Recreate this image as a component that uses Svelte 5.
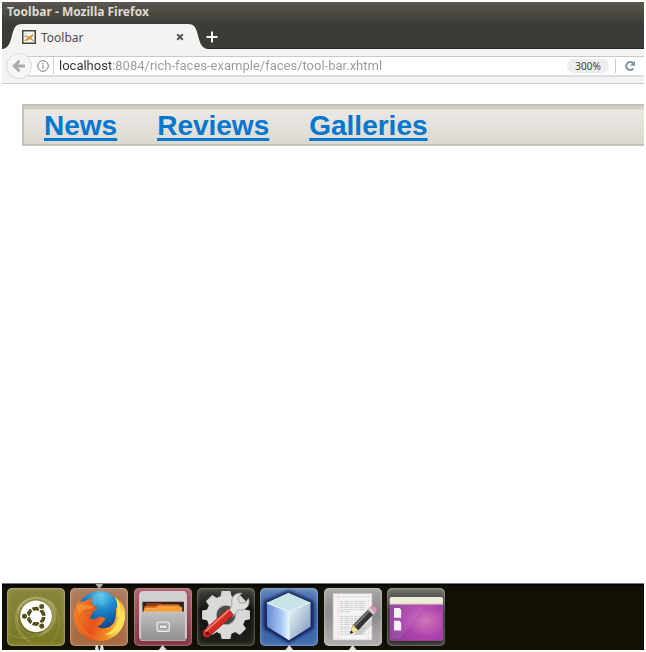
<script>
  let address = $state('localhost:8084/rich-faces-example/faces/tool-bar.xhtml');
  const links = ['News', 'Reviews', 'Galleries'];
  const teeth = [0, 45, 90, 135, 180, 225, 270, 315];
  const apps = [
    { id: 'ubuntu', name: 'Search your computer', box: '21 38 172 172', tone: 'olive', marks: 0 },
    { id: 'firefox', name: 'Firefox', box: '211 38 172 172', tone: 'copper', marks: 2, active: true },
    { id: 'files', name: 'Files', box: '11 38 172 172', tone: 'wine', marks: 1 },
    { id: 'settings', name: 'System Settings', box: '202 38 172 172', tone: 'black', marks: 0 },
    { id: 'netbeans', name: 'NetBeans', box: '13 38 172 172', tone: 'blue', marks: 1 },
    { id: 'editor', name: 'Text Editor', box: '204 38 172 172', tone: 'silver', marks: 1 },
    { id: 'desktop', name: 'Show Desktop', box: '21 38 172 172', tone: 'slate', marks: 0 }
  ];
  const lines = [78, 84, 90, 96, 102, 108, 122, 128, 134, 140, 146, 154, 160, 168, 175];
</script>

<div class="screen">
  <header class="chrome">
    <div class="title">Toolbar - Mozilla Firefox</div>
    <div class="tabs">
      <div class="tab">
        <svg class="edge" viewBox="0 0 20 24" preserveAspectRatio="none" aria-hidden="true"><path d="M0 24C7 23 8 18 10 11C12 4 13 0 20 0V24Z" /></svg>
        <div class="tab-body">
          <svg class="favicon" viewBox="0 0 14 14" aria-hidden="true">
            <rect x=".75" y=".75" width="12.5" height="12.5" fill="#faf8f2" stroke="#45443f" stroke-width="1.5" />
            <path d="M2.5 10.5l3-3-2-2 3.5 1.2 4-2.7-.5 2.6-1.5 1.4 2.5 2.5-3.6-1.5-2.4 1.5Z" fill="#d9a33e" stroke="#a58040" stroke-width=".4" />
            <path d="M2 7l2-1M10 10l2 1M3 3l1 1" stroke="#66707c" stroke-width=".7" />
          </svg>
          <span>Toolbar</span>
          <button class="close" aria-label="Close tab"><svg viewBox="0 0 8 8"><path d="M1.2 1.2l5.6 5.6M6.8 1.2L1.2 6.8" /></svg></button>
        </div>
        <svg class="edge" viewBox="0 0 20 24" preserveAspectRatio="none" aria-hidden="true"><path d="M20 24C13 23 12 18 10 11C8 4 7 0 0 0V24Z" /></svg>
      </div>
      <button class="add" aria-label="New tab"><svg viewBox="0 0 12 12"><path d="M6 .5v11M.5 6h11" /></svg></button>
    </div>
    <div class="nav">
      <button class="back" aria-label="Back"><svg viewBox="0 0 14 14"><path d="M13 7H3M7.5 1.8L2.3 7l5.2 5.2" /></svg></button>
      <div class="field">
        <svg class="info" viewBox="0 0 12 12" aria-hidden="true"><circle cx="6" cy="6" r="5.3" /><path d="M6 5v4M6 2.8v1.4" /></svg>
        <input class="address" aria-label="Address" bind:value={address} spellcheck="false" />
        <button class="zoom">300%</button>
        <button class="reload" aria-label="Reload"><svg viewBox="0 0 12 12"><path d="M9.3 8.6A4 4 0 1 1 9 3.2" /><path class="tip" d="M11 .8v5H6Z" /></svg></button>
      </div>
    </div>
  </header>

  <main>
    <nav class="toolbar">
      {#each links as link}<a href="#{link.toLowerCase()}">{link}</a>{/each}
    </nav>
  </main>

  <footer class="dock">
    <div class="launchers">
      {#each apps as app}
        <button class="tile {app.tone}" aria-label={app.name}>
          {#if app.active}<i class="mark top"></i>{/if}
          <svg viewBox={app.box}>
            {#if app.id === 'ubuntu'}
              <g fill="none" stroke="#e0dfaa" stroke-opacity=".3" stroke-width="2">
                <path d="M55 105C62 65 135 50 170 105M55 115C55 72 110 48 161 85M142 78C185 103 188 160 150 206M157 125C150 180 75 201 25 174M50 121C55 177 105 188 147 160" />
              </g>
              <path d="M50 115C55 60 130 45 160 88C180 125 160 174 110 184C148 162 165 102 133 79C105 60 75 72 50 115Z" fill="#e5e3b0" opacity=".25" />
              <path d="M55 130C50 165 80 190 100 200C65 200 38 160 45 115C50 85 70 72 85 70C65 85 55 105 55 130Z" fill="#e5e3b0" opacity=".18" />
              <circle cx="107" cy="124" r="49" fill="#4b4811" opacity=".35" />
              <circle cx="107" cy="122" r="47" fill="#fff" />
              <circle cx="107" cy="122" r="23" fill="none" stroke="#555018" stroke-width="11" />
              <path d="M107 122H66M107 122L128 158M107 122L128 86M107 122H140M107 122L90 93M107 122L90 151" stroke="#fff" stroke-width="4" />
              <circle cx="107" cy="122" r="17" fill="#fff" />
              <g fill="#555018" stroke="#fff" stroke-width="3"><circle cx="73" cy="122" r="9" /><circle cx="124" cy="93" r="9" /><circle cx="124" cy="151" r="9" /></g>
            {:else if app.id === 'firefox'}
              <defs>
                <radialGradient id="globe" cx=".55" cy=".1" r=".8"><stop stop-color="#62c8ee" /><stop offset=".45" stop-color="#1985c8" /><stop offset="1" stop-color="#123d83" /></radialGradient>
                <linearGradient id="fox" x1="0" y1="0" x2="1" y2=".25"><stop stop-color="#f28a24" /><stop offset=".5" stop-color="#e6511f" /><stop offset=".82" stop-color="#f28c22" /><stop offset="1" stop-color="#ffdf54" /></linearGradient>
              </defs>
              <circle cx="298" cy="111" r="64" fill="url(#globe)" />
              <path d="M275 62l21-11 17 5-9 10 15 9-10 15-17-7-12 9Z" fill="#78d8ee" opacity=".25" />
              <path d="M236 72C237 78 242 80 248 79C260 77 268 71 280 65C276 73 274 79 276 86C281 91 288 92 292 96C292 103 279 108 276 113C274 118 275 123 269 126C278 134 286 131 292 127C301 121 312 123 316 131C309 136 305 149 292 153C310 162 332 157 342 139C349 124 350 107 346 94L353 101C358 88 351 75 344 65C369 79 376 102 374 120C377 156 343 195 298 195C252 195 221 159 222 116C223 104 227 94 232 86Z" fill="url(#fox)" />
              <path d="M344 65C360 78 365 98 361 117L368 105C371 142 352 174 318 182L334 174C326 177 319 177 313 175C338 169 355 148 355 116L347 126C352 99 354 85 344 65Z" fill="#ffe35b" />
              <path d="M231 91C243 84 262 88 281 93L270 101C260 97 248 103 237 116C234 107 230 102 231 91Z" fill="#f49d35" opacity=".65" />
              <path d="M239 145C251 178 281 188 312 185" fill="none" stroke="#f38526" stroke-width="5" opacity=".5" />
            {:else if app.id === 'files'}
              <defs><linearGradient id="cabinet" x2="0" y2="1"><stop stop-color="#c1c0c0" /><stop offset="1" stop-color="#908e8e" /></linearGradient></defs>
              <path d="M26 188V61Q26 47 39 47H156Q168 47 168 61V188Z" fill="#d2d0cf" />
              <path d="M36 79H159V119H36Z" fill="#30211e" />
              <path d="M48 83H90L97 87H147V109H43Z" fill="#963c14" />
              <path d="M42 92H78L84 87H144V116H42Z" fill="#e4711b" />
              <path d="M40 100H75L80 95H154V119H40Z" fill="#f79c37" />
              <path d="M42 99H76L81 94H153" fill="none" stroke="#ffd078" stroke-width="2" />
              <path d="M31 109H163V194H31Z" fill="url(#cabinet)" stroke="#d0cece" stroke-width="2" />
              <rect x="79" y="139" width="37" height="28" rx="7" fill="#b9b7b7" stroke="#f0f0f0" stroke-width="3" />
              <rect x="86" y="148" width="23" height="10" rx="2" fill="#eee" stroke="#777" stroke-width="2" />
            {:else if app.id === 'settings'}
              <g fill="#d7d7d7">
                {#each teeth as angle}<path d="M270 70L275 47H301L306 70Z" transform="rotate({angle} 288 118)" />{/each}
              </g>
              <circle cx="288" cy="118" r="43" fill="none" stroke="#dadada" stroke-width="30" />
              <circle cx="288" cy="118" r="29" fill="#4a4a45" stroke="#b4b4b4" stroke-width="3" />
              <path d="M294 112L306 87C300 64 317 50 335 53L323 68L329 83L345 82L355 68C362 92 345 107 324 103L309 123Z" fill="#dededc" stroke="#8b8b88" stroke-width="2" />
              <path d="M295 99L220 166C217 177 225 188 236 183L310 118Z" fill="#d32b25" stroke="#8d1616" stroke-width="2" />
              <path d="M296 104L229 165" stroke="#ff7866" stroke-width="6" stroke-linecap="round" />
              <circle cx="233" cy="173" r="5" fill="#4c1411" />
            {:else if app.id === 'netbeans'}
              <defs>
                <linearGradient id="cube-left"><stop stop-color="#668bd2" /><stop offset=".65" stop-color="#a6c7f3" /><stop offset="1" stop-color="#e6f6ff" /></linearGradient>
                <linearGradient id="cube-right" x2="1" y2="1"><stop stop-color="#f5fcff" /><stop offset="1" stop-color="#7593b5" /></linearGradient>
                <filter id="glow"><feGaussianBlur stdDeviation="4" /></filter>
              </defs>
              <path d="M98 45L172 77V158L98 202L24 158V77Z" fill="#17235f" filter="url(#glow)" />
              <path d="M97 52L163 81L99 108L33 82Z" fill="#c9e4e6" />
              <path d="M33 82L99 108V193L34 153Z" fill="url(#cube-left)" />
              <path d="M99 108L163 81V153L99 193Z" fill="url(#cube-right)" />
              <path d="M34 82L99 108L162 81M99 108V190" fill="none" stroke="#e5f5fa" stroke-width="4" />
            {:else if app.id === 'editor'}
              <path d="M231 54H346V192H231Z" fill="#f4f4f4" stroke="#c6c6c6" stroke-width="2" />
              <path d="M236 64H342" stroke="#ddd" stroke-width="3" />
              <path d="M246 54V191M335 54V191" stroke="#f1cfd2" stroke-width="2" />
              {#each lines as y, i}<path d="M251 {y}H{i === 5 ? 281 : i === 10 ? 313 : 328}" stroke="#bbbcbe" stroke-width="2" stroke-dasharray="11 2 17 2 7 3" />{/each}
              <path d="M290 178L365 109L374 125L313 176Z" fill="#777" opacity=".25" />
              <path d="M281 174L290 148L336 101L351 116L305 164Z" fill="#333" />
              <path d="M291 149L337 102L342 106L297 153Z" fill="#767676" />
              <path d="M281 174L290 148L306 164Z" fill="#f2e58a" />
              <path d="M281 174L284 164L291 170Z" fill="#111" />
              <path d="M334 102L343 93L359 109L350 118Z" fill="#d0d0d0" stroke="#888" />
              <path d="M342 95C348 86 363 94 361 106L356 112Z" fill="#e391bd" stroke="#b55d90" />
            {:else}
              <defs><radialGradient id="wallpaper" cx=".68" cy=".55" r=".75"><stop stop-color="#cf77b7" /><stop offset=".5" stop-color="#ae42ad" /><stop offset="1" stop-color="#843790" /></radialGradient></defs>
              <rect x="30" y="66" width="156" height="127" rx="5" fill="url(#wallpaper)" stroke="#c554c6" stroke-width="2" />
              <path d="M29 87V71Q29 65 35 65H181Q187 65 187 71V87Z" fill="#eeeddc" />
              <path d="M30 86H186" stroke="#aaa694" stroke-width="2" />
              <path d="M31 88H185L130 96L58 190H34Z" fill="#c780ce" opacity=".24" />
              <path d="M42 97H58L63 103V126H42ZM42 135H58L63 141V164H42Z" fill="#f6f4f6" />
            {/if}
          </svg>
          {#if app.marks}<span class="marks">{#each Array(app.marks) as _}<i class="mark" class:small={app.marks > 1}></i>{/each}</span>{/if}
        </button>
      {/each}
    </div>
  </footer>
</div>

<style>
  :global(body) { background: #fff; }
  .screen { box-sizing: border-box; min-height: 100vh; padding: 2px; display: flex; flex-direction: column; font-family: "Noto Sans", "Open Sans", sans-serif; }
  button { border: 0; padding: 0; margin: 0; background: none; font: inherit; color: inherit; }
  svg { display: block; }
  .chrome { background: linear-gradient(#5a584f, #3c3b37 22px); }
  .title { height: 22px; padding-left: 5px; font-size: 12px; font-weight: 700; line-height: 20px; color: #dfdbd2; }
  .tabs { display: flex; align-items: stretch; height: 24px; border-bottom: 1px solid #242320; }
  .tab { display: flex; height: 25px; color: #4c4c4c; }
  .edge { width: 20px; height: 25px; fill: #f4f3f2; }
  .tab-body { display: flex; align-items: center; width: 166px; padding-top: 1px; box-sizing: border-box; background: #f4f3f2; font-size: 12px; }
  .favicon { width: 14px; height: 14px; margin-right: 5px; }
  .close { margin-left: auto; padding: 4px; }
  .close svg { width: 8px; height: 8px; fill: none; stroke: #555; stroke-width: 2; }
  .add { margin-left: -2px; padding-top: 2px; }
  .add svg { width: 12px; height: 12px; fill: none; stroke: #f4f3ef; stroke-width: 2; }
  .nav { display: flex; align-items: center; height: 34px; padding-left: 4px; background: #f4f3f2; border-bottom: 1px solid #cfcdca; }
  .back { box-sizing: border-box; width: 26px; height: 26px; display: grid; place-items: center; flex: none; border: 1px solid #dcdad7; border-radius: 50%; background: #f7f6f5; z-index: 1; }
  .back svg { width: 14px; height: 14px; fill: none; stroke: #ababa9; stroke-width: 3; }
  .field { flex: 1; min-width: 0; height: 18px; display: flex; align-items: center; margin-left: -4px; padding-left: 9px; background: #fff; border-top: 1px solid #cbc8c5; border-bottom: 2px solid #dedcda; }
  .info { width: 12px; height: 12px; flex: none; fill: none; stroke: #777; stroke-width: 1; margin-right: 4px; }
  .address { flex: 1; min-width: 0; box-sizing: border-box; height: 16px; border: 0; border-left: 1px solid #d0d0d0; padding: 0 0 0 5px; outline: 0; font: 13px/16px Roboto, "Noto Sans", sans-serif; color: transparent; background: linear-gradient(90deg, #333 57px, #999 57px); background-clip: text; }
  .zoom { width: 42px; height: 14px; border-radius: 7px; background: #ededed; color: #444; font-size: 10px; line-height: 14px; }
  .reload { margin-left: 6px; padding: 1px 8px; border-left: 1px solid #ccc; }
  .reload svg { width: 12px; height: 12px; fill: none; stroke: #8294a2; stroke-width: 2; }
  .reload .tip { fill: #8294a2; stroke: none; }
  main { flex: 1; padding: 20px 0 0 20px; }
  .toolbar { display: flex; gap: 40px; box-sizing: border-box; height: 42px; padding: 4px 20px 0; border: 2px solid #c3bfb9; border-right: 0; background: linear-gradient(#d2cec7 3px, #ebe7e3 4px, #dcd8d2); }
  .toolbar a { color: #0078d0; font: bold 28px/32px "Liberation Sans", Arial, sans-serif; text-decoration-thickness: 3px; text-underline-offset: 3px; text-decoration-skip-ink: none; }
  .dock { height: 67px; box-sizing: border-box; padding: 4px 5px 0; background: #121002; border-top: 1px solid #777; box-shadow: inset 0 2px #040401; }
  .launchers { max-width: 438px; display: flex; justify-content: space-between; }
  .tile { position: relative; width: 58px; height: 58px; border-radius: 5px; box-shadow: inset 0 0 0 1px rgb(255 255 255 / 12%), inset 0 0 5px rgb(255 255 255 / 30%); }
  .tile > svg { width: 58px; height: 58px; }
  .olive { background: linear-gradient(#89863e, #797720); }
  .copper { background: linear-gradient(#ad7c60, #a7683d); }
  .wine { background: linear-gradient(#aa5c68, #812d3e); }
  .black { background: linear-gradient(#44433d, #10100b 40%, #24231d); }
  .blue { background: linear-gradient(#6386bc, #315b9f 40%, #416dad); }
  .silver { background: linear-gradient(#a8a7a6, #8c8b89 40%, #b0afad); }
  .slate { background: linear-gradient(#74766d, #25261e 40%, #34352e); }
  .marks { position: absolute; left: 0; right: 0; bottom: -4px; display: flex; justify-content: center; gap: 1px; }
  .mark { width: 8px; height: 5px; background: #e0dfdd; clip-path: polygon(50% 0, 100% 100%, 0 100%); }
  .mark.small { width: 4px; clip-path: polygon(25% 0, 75% 0, 100% 100%, 0 100%); }
  .mark.top { position: absolute; top: -4px; left: 25px; background: #aaa; clip-path: polygon(0 0, 100% 0, 50% 100%); }
</style>
